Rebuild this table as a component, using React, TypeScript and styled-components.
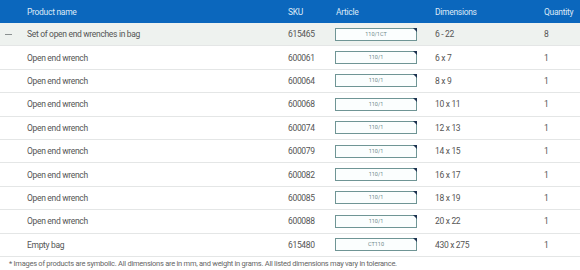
import React from "react";
import styled, { createGlobalStyle } from "styled-components";

const Global = createGlobalStyle`
  html, body { margin: 0; padding: 0; background: #fff; }
  body { font-family: Roboto, "Noto Sans", sans-serif; }
`;

const cols = "27px 261px 48px 99px 109px 36px";

const Page = styled.div`
  width: 580px;
  height: 270px;
  overflow: hidden;
  background: #fff;
`;

const HeaderRow = styled.div`
  display: grid;
  grid-template-columns: ${cols};
  align-items: center;
  height: 23px;
  background: #0b67bd;
  color: #dce9f7;
  font-size: 8.5px;
  letter-spacing: -0.3px;
`;

const Row = styled.div<{ $hl?: boolean }>`
  display: grid;
  grid-template-columns: ${cols};
  align-items: center;
  height: 22.4px;
  border-bottom: 1px solid #e4e6e6;
  background: ${(p) => (p.$hl ? "#eef2ef" : "#fff")};
  color: #555;
  font-size: 8.5px;
  letter-spacing: -0.32px;
`;

const Cell = styled.div`
  white-space: nowrap;
`;

const Dash = styled.div`
  width: 7px;
  height: 1px;
  background: #8a9090;
  margin-left: 5px;
`;

const ArticleBox = styled.div`
  position: relative;
  width: 80px;
  height: 11px;
  margin-left: -1px;
  border: 1px solid #6f9595;
  background: #fbfefe;
  color: #6f8a8a;
  font-size: 5.5px;
  line-height: 11px;
  text-align: center;
  letter-spacing: 0;
  &::after {
    content: "";
    position: absolute;
    top: -1px;
    right: -1px;
    border-top: 4px solid #1d3350;
    border-left: 4px solid transparent;
  }
`;

const Footer = styled.div`
  padding: 2px 0 0 9px;
  color: #666;
  font-size: 7.5px;
  letter-spacing: -0.26px;
  white-space: nowrap;
`;

const rows = [
  ["Set of open end wrenches in bag", "615465", "110/1CT", "6 - 22", "8"],
  ["Open end wrench", "600061", "110/1", "6 x 7", "1"],
  ["Open end wrench", "600064", "110/1", "8 x 9", "1"],
  ["Open end wrench", "600068", "110/1", "10 x 11", "1"],
  ["Open end wrench", "600074", "110/1", "12 x 13", "1"],
  ["Open end wrench", "600079", "110/1", "14 x 15", "1"],
  ["Open end wrench", "600082", "110/1", "16 x 17", "1"],
  ["Open end wrench", "600085", "110/1", "18 x 19", "1"],
  ["Open end wrench", "600088", "110/1", "20 x 22", "1"],
  ["Empty bag", "615480", "CT110", "430 x 275", "1"],
];

export default function App() {
  return (
    <Page>
      <Global />
      <HeaderRow>
        <Cell />
        <Cell>Product name</Cell>
        <Cell>SKU</Cell>
        <Cell>Article</Cell>
        <Cell>Dimensions</Cell>
        <Cell>Quantity</Cell>
      </HeaderRow>
      {rows.map((r, i) => (
        <Row key={i} $hl={i === 0}>
          <Cell>{i === 0 ? <Dash /> : null}</Cell>
          <Cell>{r[0]}</Cell>
          <Cell>{r[1]}</Cell>
          <Cell>
            <ArticleBox>{r[2]}</ArticleBox>
          </Cell>
          <Cell>{r[3]}</Cell>
          <Cell>{r[4]}</Cell>
        </Row>
      ))}
      <Footer>
        * Images of products are symbolic. All dimensions are in mm, and weight in grams. All listed dimensions may vary in tolerance.
      </Footer>
    </Page>
  );
}
